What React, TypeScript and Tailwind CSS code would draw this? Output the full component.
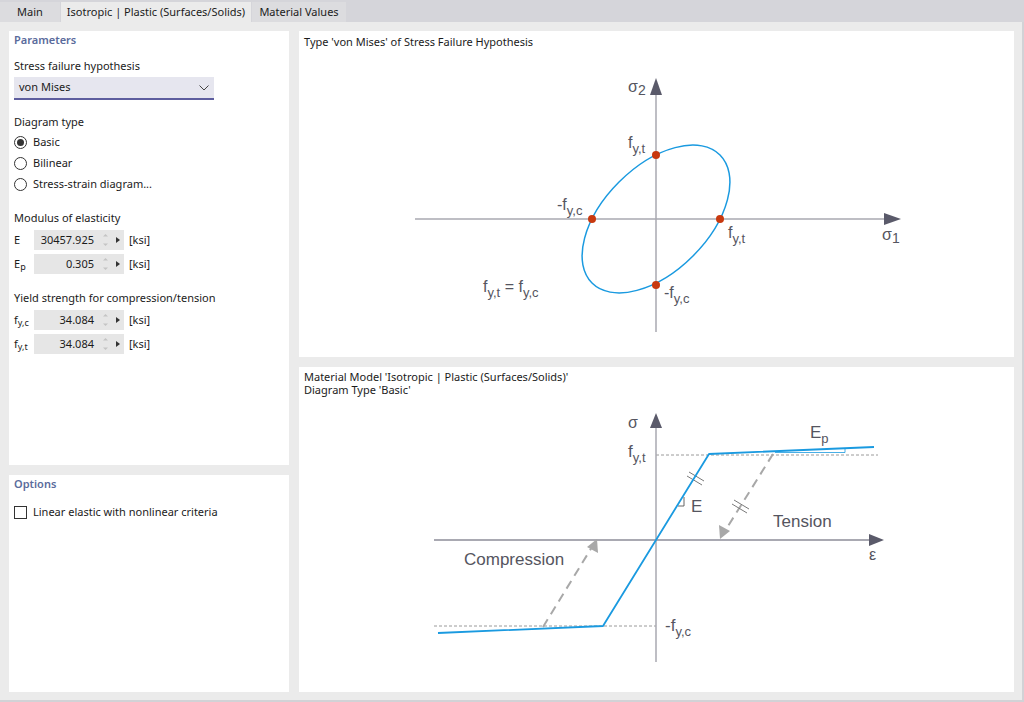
import React from "react";

const uiFont = { fontFamily: '"Segoe UI", "Noto Sans", sans-serif' };
const drawFont = '"Liberation Sans", Arial, sans-serif';

const Tab = ({ label, active, w }: { label: string; active?: boolean; w: string }) => (
  <div
    className={`${w} h-[20px] flex items-center justify-center whitespace-nowrap text-[11px] text-[#1b1b1b] ${
      active ? "bg-[#ebebeb]" : "bg-[#dcdcdf]"
    }`}
  >
    {label}
  </div>
);

const Label = ({ children, className = "" }: { children: React.ReactNode; className?: string }) => (
  <div className={`text-[11px] leading-[16px] text-[#1b1b1b] ${className}`}>{children}</div>
);

const SectionTitle = ({ children }: { children: React.ReactNode }) => (
  <div className="text-[11px] leading-[16px] font-semibold text-[#5a6b9c]">{children}</div>
);

const Radio = ({ label, checked }: { label: string; checked?: boolean }) => (
  <div className="flex items-center gap-[6px] h-[21px]">
    <div className="w-[13px] h-[13px] rounded-full border border-[#333] bg-white flex items-center justify-center">
      {checked && <div className="w-[7px] h-[7px] rounded-full bg-[#333]" />}
    </div>
    <span className="text-[11px] text-[#1b1b1b]">{label}</span>
  </div>
);

const NumberField = ({ label, sub, value }: { label: string; sub?: string; value: string }) => (
  <div className="flex items-center h-[24px]">
    <div className="w-[20px] text-[11px] leading-[16px] text-[#1b1b1b]">
      {label}
      {sub && <span className="text-[9px] relative top-[2px]">{sub}</span>}
    </div>
    <div className="w-[90px] h-[20px] bg-[#e6e6e6] flex items-center">
      <span className="w-[60px] text-right text-[11px] text-[#1b1b1b]">{value}</span>
      <svg width="30" height="20" viewBox="0 0 30 20">
        <path d="M9 6.5 L11.5 4 L14 6.5 Z" fill="#c4c4c4" />
        <path d="M9 13.5 L11.5 16 L14 13.5 Z" fill="#c4c4c4" />
        <path d="M22 7 L26 10 L22 13 Z" fill="#333" />
      </svg>
    </div>
    <span className="ml-[5px] text-[11px] text-[#1b1b1b]">[ksi]</span>
  </div>
);

const Sub = ({ t, up = 5 }: { t: string; up?: number }) => (
  <tspan fontSize="13" dy={up}>
    {t}
  </tspan>
);

const VonMisesDiagram = () => (
  <svg className="absolute inset-0" width="715" height="326" viewBox="299 31 715 326" fontFamily={drawFont}>
    <line x1="415" y1="219" x2="890" y2="219" stroke="#a9a9b0" strokeWidth="1.5" />
    <path d="M901 219 L884 213 L884 225 Z" fill="#5a5a6a" />
    <line x1="656" y1="332" x2="656" y2="88" stroke="#a9a9b0" strokeWidth="1.5" />
    <path d="M656 78 L650 95 L662 95 Z" fill="#5a5a6a" />
    <ellipse
      cx="656"
      cy="219"
      rx="90.5"
      ry="52.3"
      transform="rotate(-45 656 219)"
      fill="none"
      stroke="#1a9ae0"
      strokeWidth="1.5"
    />
    <circle cx="656" cy="155" r="4" fill="#c8390f" />
    <circle cx="720" cy="219" r="4" fill="#c8390f" />
    <circle cx="592" cy="219" r="4" fill="#c8390f" />
    <circle cx="656" cy="285" r="4" fill="#c8390f" />
    <g fill="#555560" fontSize="16">
      <text x="628" y="92">
        σ<tspan fontSize="14" dy="3">2</tspan>
      </text>
      <text x="882" y="240">
        σ<tspan fontSize="14" dy="3">1</tspan>
      </text>
      <text x="628" y="148">
        f<Sub t="y,t" />
      </text>
      <text x="557" y="210">
        -f<Sub t="y,c" />
      </text>
      <text x="728" y="238">
        f<Sub t="y,t" />
      </text>
      <text x="664" y="298">
        -f<Sub t="y,c" />
      </text>
      <text x="483" y="292">
        f<Sub t="y,t" />
        <tspan dy="-5"> = f</tspan>
        <Sub t="y,c" />
      </text>
    </g>
  </svg>
);

const StressStrainDiagram = () => (
  <svg className="absolute inset-0" width="715" height="325" viewBox="299 367 715 325" fontFamily={drawFont}>
    <line x1="656" y1="455" x2="878" y2="455" stroke="#9a9a9a" strokeWidth="1" strokeDasharray="3 2" />
    <line x1="434" y1="626" x2="656" y2="626" stroke="#9a9a9a" strokeWidth="1" strokeDasharray="3 2" />
    <line x1="434" y1="540" x2="874" y2="540" stroke="#8c8c98" strokeWidth="1.3" />
    <path d="M884 540 L869 534 L869 546 Z" fill="#5a5a6a" />
    <line x1="656" y1="662" x2="656" y2="422" stroke="#a9a9b0" strokeWidth="1.5" />
    <path d="M656 413 L650 428 L662 428 Z" fill="#5a5a6a" />
    {/* unloading arrows */}
    <line x1="773" y1="454" x2="725" y2="531" stroke="#a8a8a8" strokeWidth="2" strokeDasharray="9 6" />
    <path d="M720 539 L719 525 L730 531 Z" fill="#a8a8a8" />
    <line x1="543" y1="627" x2="592" y2="547" stroke="#a8a8a8" strokeWidth="2" strokeDasharray="9 6" />
    <path d="M597 539 L598 553 L587 547 Z" fill="#a8a8a8" />
    {/* tick marks */}
    <g stroke="#7a7a7a" strokeWidth="1">
      <line x1="687" y1="476" x2="702" y2="485" />
      <line x1="689" y1="472" x2="704" y2="481" />
      <line x1="732" y1="504" x2="747" y2="513" />
      <line x1="734" y1="500" x2="749" y2="509" />
    </g>
    <path d="M678 506 H684 V497" fill="none" stroke="#555" strokeWidth="0.9" />
    <path d="M775 452.5 H845 V448.5" fill="none" stroke="#1a9ae0" strokeWidth="0.8" />
    <polyline
      points="438,633 603,626 709,454 874,447"
      fill="none"
      stroke="#1a9ae0"
      strokeWidth="1.8"
      strokeLinejoin="round"
    />
    <g fill="#555560" fontSize="17">
      <text x="628" y="428" fontSize="16">σ</text>
      <text x="628" y="457">
        f<Sub t="y,t" />
      </text>
      <text x="810" y="438">
        E<Sub t="p" />
      </text>
      <text x="691" y="512">E</text>
      <text x="773" y="527">Tension</text>
      <text x="464" y="565">Compression</text>
      <text x="869" y="560" fontSize="16">ε</text>
      <text x="665" y="631">
        -f<Sub t="y,c" />
      </text>
    </g>
  </svg>
);

export default function App() {
  return (
    <div className="w-[1024px] h-[702px] bg-[#ebebeb] flex flex-col overflow-hidden" style={uiFont}>
      <div className="h-[22px] bg-[#d5d5da] flex items-end shrink-0">
        <Tab label="Main" w="w-[60px]" />
        <div className="w-[1px]" />
        <Tab label="Isotropic | Plastic (Surfaces/Solids)" w="w-[190px]" active />
        <div className="w-[1px]" />
        <Tab label="Material Values" w="w-[94px]" />
      </div>
      <div className="flex-1 flex gap-[10px] pt-[9px] pl-[9px] pr-[8px] pb-[8px] border-r-2 border-b-2 border-[#d2d2d6]">
        <div className="w-[280px] flex flex-col gap-[10px]">
          <div className="h-[434px] bg-white px-[5px] pt-[1px]">
            <SectionTitle>Parameters</SectionTitle>
            <Label className="mt-[10px]">Stress failure hypothesis</Label>
            <div className="mt-[3px] w-[200px] h-[23px] bg-[#e6e6ef] border-b-2 border-[#5d5d9e] flex items-center justify-between px-[5px]">
              <span className="text-[11px] text-[#1b1b1b]">von Mises</span>
              <svg width="10" height="6" viewBox="0 0 10 6">
                <polyline points="0.5,0.5 5,5 9.5,0.5" fill="none" stroke="#444" strokeWidth="1" />
              </svg>
            </div>
            <Label className="mt-[14px]">Diagram type</Label>
            <div className="mt-[2px] flex flex-col">
              <Radio label="Basic" checked />
              <Radio label="Bilinear" />
              <Radio label="Stress-strain diagram..." />
            </div>
            <Label className="mt-[15px]">Modulus of elasticity</Label>
            <div className="mt-[2px] flex flex-col">
              <NumberField label="E" value="30457.925" />
              <NumberField label="E" sub="p" value="0.305" />
            </div>
            <Label className="mt-[14px]">Yield strength for compression/tension</Label>
            <div className="mt-[2px] flex flex-col">
              <NumberField label="f" sub="y,c" value="34.084" />
              <NumberField label="f" sub="y,t" value="34.084" />
            </div>
          </div>
          <div className="flex-1 bg-white px-[5px] pt-[1px]">
            <SectionTitle>Options</SectionTitle>
            <div className="mt-[12px] h-[16px] flex items-center gap-[6px]">
              <div className="w-[13px] h-[13px] border border-[#333] bg-white" />
              <span className="text-[11px] text-[#1b1b1b]">Linear elastic with nonlinear criteria</span>
            </div>
          </div>
        </div>
        <div className="flex-1 flex flex-col gap-[10px]">
          <div className="relative h-[326px] bg-white">
            <div className="relative z-10 px-[5px] pt-[3px] text-[11px] leading-[16px] text-[#1b1b1b]">
              Type 'von Mises' of Stress Failure Hypothesis
            </div>
            <VonMisesDiagram />
          </div>
          <div className="relative flex-1 bg-white">
            <div className="relative z-10 px-[5px] pt-[3px] text-[11px] leading-[13px] text-[#1b1b1b]">
              <div>Material Model 'Isotropic | Plastic (Surfaces/Solids)'</div>
              <div>Diagram Type 'Basic'</div>
            </div>
            <StressStrainDiagram />
          </div>
        </div>
      </div>
    </div>
  );
}
